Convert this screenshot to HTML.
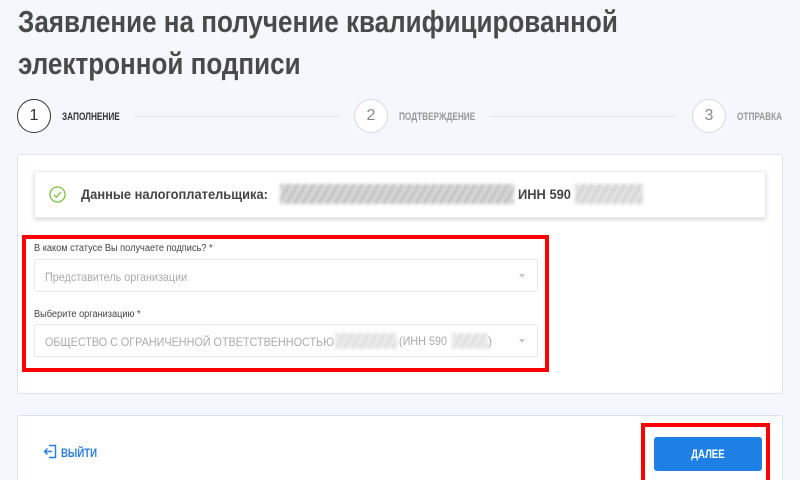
<!DOCTYPE html>
<html style="width:800px;height:480px;overflow:hidden"><head><meta charset="utf-8"><style>
*{margin:0;padding:0;box-sizing:border-box}
body{width:800px;height:480px;overflow:hidden;background:#f4f7fb;font-family:"Liberation Sans",sans-serif;position:relative;color:#333}
.abs{position:absolute}
.t{position:absolute;left:18px;font-weight:bold;font-size:31px;color:#4a4a4a;white-space:nowrap;transform-origin:left top;transform:scaleX(.84)}
.circ{position:absolute;width:34px;height:34px;border-radius:50%;border:1.5px solid #d5dbe2;background:#fff;text-align:center;line-height:31px;font-size:16px;color:#888}
.lab{position:absolute;font-size:11px;font-weight:bold;color:#999;transform-origin:left top;transform:scaleX(.75);white-space:nowrap}
.line{position:absolute;height:1px;background:#e1e5ea;top:116px}
.card{position:absolute;left:17px;width:766px;background:#fff;border:1px solid #dde3ea;border-radius:3px}
.sel{position:absolute;left:34px;width:504px;height:33px;border:1px solid #e3e6ea;border-radius:3px;background:#fff;font-size:12px;color:#aaa;padding:10px 10px;white-space:nowrap}
.sel span{display:inline-block;transform:scaleX(.9);transform-origin:left top}
.sel:after{content:"";position:absolute;right:12px;top:14px;border:3.5px solid transparent;border-top:4px solid #c8c8c8}
.fl{position:absolute;left:34px;font-size:10px;color:#444;transform:scaleX(.92);transform-origin:left top;white-space:nowrap}
.blur{position:absolute;background:repeating-linear-gradient(120deg,#bbb 0 3px,#ddd 3px 7px);filter:blur(1.5px)}
</style></head><body>
<div class="t" style="top:4px">Заявление на получение квалифицированной</div>
<div class="t" style="top:46px">электронной подписи</div>

<div class="circ" style="left:17px;top:99px;border-color:#333;color:#333">1</div>
<div class="lab" style="left:62px;top:111px;color:#333">ЗАПОЛНЕНИЕ</div>
<div class="line" style="left:134px;width:206px"></div>
<div class="circ" style="left:354px;top:99px">2</div>
<div class="lab" style="left:399px;top:111px">ПОДТВЕРЖДЕНИЕ</div>
<div class="line" style="left:490px;width:186px"></div>
<div class="circ" style="left:692px;top:99px">3</div>
<div class="lab" style="left:737px;top:111px">ОТПРАВКА</div>

<div class="card" style="top:154px;height:240px"></div>
<div class="abs" style="left:34px;top:171px;width:732px;height:47px;background:#fff;border:1px solid #e8ebef;box-shadow:0 2px 4px rgba(0,0,0,.15);border-radius:2px"></div>
<svg class="abs" style="left:49px;top:186px" width="17" height="17" viewBox="0 0 17 17"><circle cx="8.5" cy="8.5" r="7.5" fill="none" stroke="#7cc142" stroke-width="1.3"/><path d="M5 8.8l2.4 2.4 4.6-5" fill="none" stroke="#7cc142" stroke-width="1.3"/></svg>
<div class="abs" style="left:81px;top:186px;font-size:14px;font-weight:bold;color:#444;transform:scaleX(.92);transform-origin:left top;white-space:nowrap">Данные налогоплательщика:</div>
<div class="blur" style="left:280px;top:184px;width:234px;height:20px"></div>
<div class="abs" style="left:518px;top:186px;font-size:14px;font-weight:bold;color:#444;transform:scaleX(.92);transform-origin:left top">ИНН 590</div>
<div class="blur" style="left:575px;top:184px;width:68px;height:20px;opacity:.7"></div>

<div class="abs" style="left:22px;top:235px;width:527px;height:137px;border:4px solid #f00"></div>
<div class="fl" style="top:243px">В каком статусе Вы получаете подпись? *</div>
<div class="sel" style="top:259px"><span>Представитель организации</span></div>
<div class="fl" style="top:309px">Выберите организацию *</div>
<div class="sel" style="top:324px"><span>ОБЩЕСТВО С ОГРАНИЧЕННОЙ ОТВЕТСТВЕННОСТЬЮ</span></div>
<div class="blur" style="left:335px;top:333px;width:62px;height:16px;opacity:.5"></div>
<div class="abs" style="left:399px;top:334px;font-size:12px;color:#aaa;transform:scaleX(.9);transform-origin:left top">(ИНН 590</div>
<div class="blur" style="left:452px;top:333px;width:36px;height:16px;opacity:.5"></div>
<div class="abs" style="left:488px;top:334px;font-size:12px;color:#aaa">)</div>

<div class="card" style="top:415px;height:80px"></div>
<svg class="abs" style="left:43px;top:444px" width="14" height="15" viewBox="0 0 14 15"><path d="M6 1.5h6.5v12H6" fill="none" stroke="#2a7de1" stroke-width="1.4"/><path d="M9 7.5H1.5M4.5 4.5l-3 3 3 3" fill="none" stroke="#2a7de1" stroke-width="1.4"/></svg>
<div class="abs" style="left:61px;top:446px;font-size:12px;font-weight:bold;color:#2a7de1;transform:scaleX(.8);transform-origin:left top">ВЫЙТИ</div>
<div class="abs" style="left:641px;top:423px;width:129px;height:70px;border:4px solid #f00"></div>
<div class="abs" style="left:654px;top:437px;width:108px;height:34px;background:#1e80e4;border-radius:3px;color:#fff;font-size:12px;font-weight:bold;text-align:center;line-height:34px"><span style="display:inline-block;transform:scaleX(.8)">ДАЛЕЕ</span></div>
</body></html>
